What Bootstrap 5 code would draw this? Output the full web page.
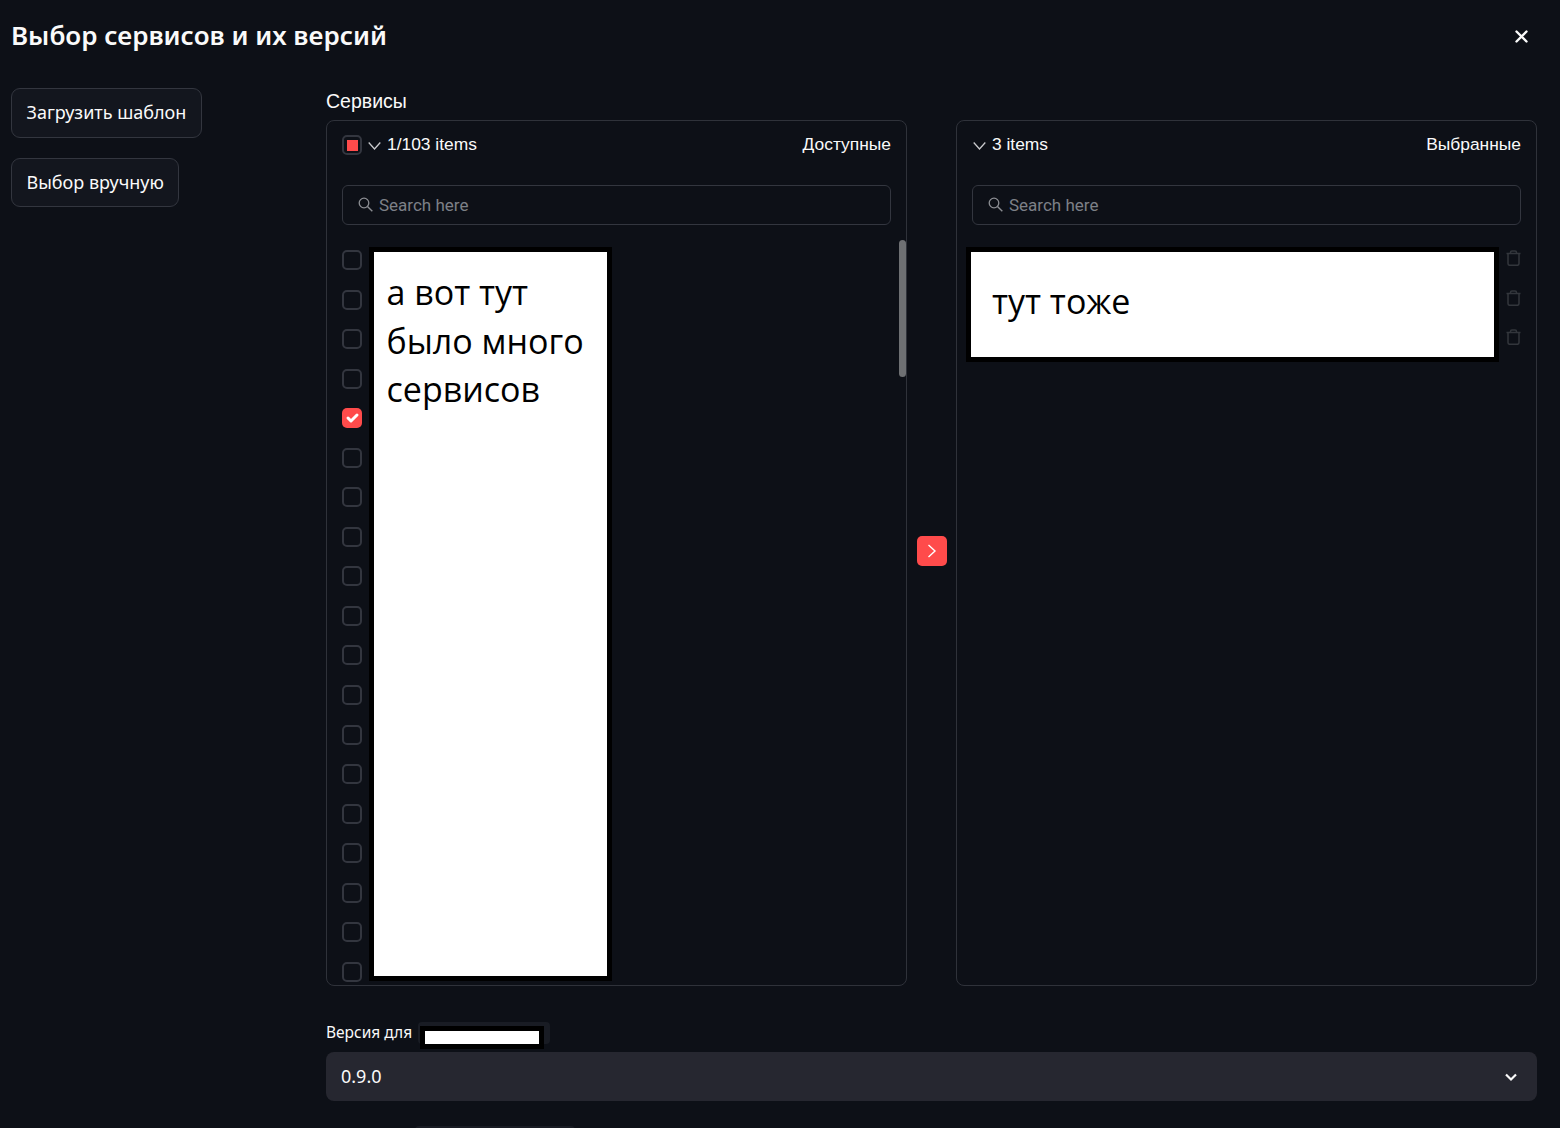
<!DOCTYPE html>
<html lang="ru">
<head>
    <meta charset="UTF-8">
    <meta name="viewport" content="width=device-width, initial-scale=1.0">
    <title>Выбор сервисов и их версий</title>
    <link href="https://cdn.jsdelivr.net/npm/bootstrap@5.3.0/dist/css/bootstrap.min.css" rel="stylesheet">
    <style>
        html, body { height: 1128px; overflow: hidden; }
        body { background: #0d1017; color: #fafafa; font-family: "Noto Sans", sans-serif; }
        .page-wrap { padding: 0 23px 0 11px; }
        .dlg-head { height: 72px; }
        .dlg-title { font-size: 26px; font-weight: 600; margin: -3px 0 0; line-height: 1; color: #fafafa; }
        .dlg-close { background: none; border: 0; padding: 0; margin-right: 9px; line-height: 0; }
        .side-col { width: 315px; flex: none; padding-top: 16px; }
        .side-btn { background: #13161e; border: 1px solid #33363f; border-radius: 9px; color: #fafafa; font-size: 18px; height: 49.500px; padding: 0 14.500px; margin-bottom: 20px; display: block; }
        .main-col { flex: 1; min-width: 0; }
        .field-label { font-family: "Liberation Sans", sans-serif; font-size: 19.500px; line-height: 20px; padding-top: 19px; height: 48px; }
        .tr-panel { flex: 1; height: 866px; border: 1px solid #2f323a; border-radius: 8px; padding: 14px 15px 0; position: relative; overflow: hidden; min-width: 0; }
        .tr-head { height: 20px; margin-bottom: 30px; font-family: "Liberation Sans", sans-serif; font-size: 17.400px; line-height: 18px; }
        .tr-head-text { margin-top: -3px; }
        .tr-chev { flex: none; margin-right: 6px; }
        .tr-chev-after { margin-left: 6px; }
        .tr-chev-first { margin-left: 1px; }
        .tr-search { height: 40px; border: 1px solid #33363f; border-radius: 6px; padding: 0 15px; margin-bottom: 25px; gap: 6px; }
        .tr-search svg { margin-top: -2px; }
        .tr-search input { background: transparent; border: 0; outline: 0; padding: 2px 0 0; color: #fafafa; width: 100%; font-family: Roboto, sans-serif; font-size: 17px; }
        .tr-search input::placeholder { color: #7d8087; opacity: 1; }
        .tr-row { height: 39.560px; }
        .tr-check.form-check-input { width: 20px; height: 20px; margin: 0; background-color: transparent; border: 2px solid #33363f; border-radius: 5px; flex: none; }
        .tr-check.form-check-input:checked { background-color: #ff4b4b; border: 0; background-size: 100%; }
        .tr-partial { width: 20px; height: 20px; border: 2px solid #33363f; border-radius: 5px; flex: none; padding: 2.500px; }
        .tr-partial span { display: block; height: 100%; background: #ff4b4b; }
        .tr-arrow-col { width: 49px; flex: none; padding-bottom: 4px; }
        .tr-arrow { width: 30px; height: 30px; padding: 0; border: 0; border-radius: 5px; background: #ff4b4b; line-height: 0; }
        .tr-scroll { position: absolute; right: 0; top: 119px; width: 7px; height: 137px; border-radius: 4px; background: #6e7073; }
        .mask-box { position: absolute; background: #fff; border: 5px solid #000; color: #000; font-family: "Open Sans", sans-serif; font-size: 34px; }
        .mask-left { left: 42px; top: 126px; width: 243px; height: 734px; padding: 16px 12.500px; line-height: 48.500px; }
        .mask-right { left: 9px; top: 126px; width: 533px; height: 115px; padding: 0 21px; line-height: 98px; }
        .del-list { margin-left: auto; width: 15px; line-height: 0; }
        .ver-label { font-size: 15.500px; height: 58px; padding-top: 36px; line-height: 20px; }
        .ver-tag { position: relative; display: inline-block; width: 132px; height: 22px; margin-left: 6px; background: #191c24; border-radius: 4px; vertical-align: top; }
        .ver-mask { position: absolute; left: 2px; top: 4px; width: 124px; height: 23px; background: #fff; border: 5px solid #000; }
        .ver-select.form-select { height: 49px; margin-top: 8px; background-color: #262730; border: 0; border-radius: 8px; color: #fafafa; font-size: 18px; padding-left: 15px; background-image: none; }
        .ver-wrap { position: relative; }
        .ver-chev { position: absolute; right: 19px; top: 20px; line-height: 0; pointer-events: none; }
        .next-tag { width: 160px; height: 22px; margin: 25px 0 0 89px; background: #191c24; border-radius: 4px; }
    </style>
</head>
<body>
    <div class="page-wrap">
        <div class="dlg-head d-flex align-items-center justify-content-between">
            <h1 class="dlg-title">Выбор сервисов и их версий</h1>
            <button class="dlg-close" type="button" aria-label="Close">
                <svg width="13" height="13" viewBox="0 0 13 13"><path d="M1.500 1.500l10 10M11.500 1.500l-10 10" stroke="#fafafa" stroke-width="2.400" stroke-linecap="round"/></svg>
            </button>
        </div>
        <div class="d-flex">
            <div class="side-col">
                <button class="side-btn" type="button">Загрузить шаблон</button>
                <button class="side-btn" type="button">Выбор вручную</button>
            </div>
            <div class="main-col">
                <div class="field-label">Сервисы</div>
                <div class="d-flex align-items-center">
                    <div class="tr-panel">
                        <div class="tr-head d-flex align-items-center">
                            <div class="tr-partial"><span></span></div>
                            <svg class="tr-chev tr-chev-after" width="13" height="12" viewBox="0 0 13 12"><path d="M.7 3.500L6.500 10l5.800-6.500" fill="none" stroke="#c8c9cc" stroke-width="1.300"/></svg>
                            <span class="tr-head-text">1/103 items</span>
                            <span class="tr-head-text ms-auto">Доступные</span>
                        </div>
                        <div class="tr-search d-flex align-items-center">
                            <svg width="15" height="15" viewBox="0 0 15 15" class="flex-shrink-0"><circle cx="6" cy="6" r="4.800" fill="none" stroke="#8c8e93" stroke-width="1.300"/><path d="M9.500 9.500L14.300 14.300" stroke="#8c8e93" stroke-width="1.400"/></svg>
                            <input type="text" placeholder="Search here">
                        </div>
                        <div class="tr-row"><input class="form-check-input tr-check" type="checkbox"></div>
                        <div class="tr-row"><input class="form-check-input tr-check" type="checkbox"></div>
                        <div class="tr-row"><input class="form-check-input tr-check" type="checkbox"></div>
                        <div class="tr-row"><input class="form-check-input tr-check" type="checkbox"></div>
                        <div class="tr-row"><input class="form-check-input tr-check" type="checkbox" checked></div>
                        <div class="tr-row"><input class="form-check-input tr-check" type="checkbox"></div>
                        <div class="tr-row"><input class="form-check-input tr-check" type="checkbox"></div>
                        <div class="tr-row"><input class="form-check-input tr-check" type="checkbox"></div>
                        <div class="tr-row"><input class="form-check-input tr-check" type="checkbox"></div>
                        <div class="tr-row"><input class="form-check-input tr-check" type="checkbox"></div>
                        <div class="tr-row"><input class="form-check-input tr-check" type="checkbox"></div>
                        <div class="tr-row"><input class="form-check-input tr-check" type="checkbox"></div>
                        <div class="tr-row"><input class="form-check-input tr-check" type="checkbox"></div>
                        <div class="tr-row"><input class="form-check-input tr-check" type="checkbox"></div>
                        <div class="tr-row"><input class="form-check-input tr-check" type="checkbox"></div>
                        <div class="tr-row"><input class="form-check-input tr-check" type="checkbox"></div>
                        <div class="tr-row"><input class="form-check-input tr-check" type="checkbox"></div>
                        <div class="tr-row"><input class="form-check-input tr-check" type="checkbox"></div>
                        <div class="tr-row"><input class="form-check-input tr-check" type="checkbox"></div>
                        <div class="mask-box mask-left">а вот тут<br>было много<br>сервисов</div>
                        <div class="tr-scroll"></div>
                    </div>
                    <div class="tr-arrow-col d-flex justify-content-center">
                        <button class="tr-arrow" type="button" aria-label="Add">
                            <svg width="12" height="14" viewBox="0 0 12 14"><path d="M2.500 1l6.500 6-6.500 6" fill="none" stroke="#fff" stroke-width="1.400"/></svg>
                        </button>
                    </div>
                    <div class="tr-panel">
                        <div class="tr-head d-flex align-items-center">
                            <svg class="tr-chev tr-chev-first" width="13" height="12" viewBox="0 0 13 12"><path d="M.7 3.500L6.500 10l5.800-6.500" fill="none" stroke="#c8c9cc" stroke-width="1.300"/></svg>
                            <span class="tr-head-text">3 items</span>
                            <span class="tr-head-text ms-auto">Выбранные</span>
                        </div>
                        <div class="tr-search d-flex align-items-center">
                            <svg width="15" height="15" viewBox="0 0 15 15" class="flex-shrink-0"><circle cx="6" cy="6" r="4.800" fill="none" stroke="#8c8e93" stroke-width="1.300"/><path d="M9.500 9.500L14.300 14.300" stroke="#8c8e93" stroke-width="1.400"/></svg>
                            <input type="text" placeholder="Search here">
                        </div>
                        <div class="tr-row d-flex"><div class="del-list"><svg width="15" height="16" viewBox="0 0 15 16"><path d="M.5 3.500h14M4.500 3.500V2.500q0-1.500 1.500-1.500h3q1.500 0 1.500 1.500v1M2 3.500v10q0 1.800 1.800 1.800h7.400q1.800 0 1.800-1.800v-10" fill="none" stroke="#33363c" stroke-width="1.500"/></svg></div></div>
                        <div class="tr-row d-flex"><div class="del-list"><svg width="15" height="16" viewBox="0 0 15 16"><path d="M.5 3.500h14M4.500 3.500V2.500q0-1.500 1.500-1.500h3q1.500 0 1.500 1.500v1M2 3.500v10q0 1.800 1.800 1.800h7.400q1.800 0 1.800-1.800v-10" fill="none" stroke="#33363c" stroke-width="1.500"/></svg></div></div>
                        <div class="tr-row d-flex"><div class="del-list"><svg width="15" height="16" viewBox="0 0 15 16"><path d="M.5 3.500h14M4.500 3.500V2.500q0-1.500 1.500-1.500h3q1.500 0 1.500 1.500v1M2 3.500v10q0 1.800 1.800 1.800h7.400q1.800 0 1.800-1.800v-10" fill="none" stroke="#33363c" stroke-width="1.500"/></svg></div></div>
                        <div class="mask-box mask-right">тут тоже</div>
                    </div>
                </div>
                <div class="ver-label">Версия для<span class="ver-tag"><span class="ver-mask"></span></span></div>
                <div class="ver-wrap">
                    <select class="form-select ver-select"><option>0.9.0</option></select>
                    <span class="ver-chev"><svg width="14" height="10" viewBox="0 0 14 10"><path d="M2 2.500l5 5 5-5" fill="none" stroke="#fafafa" stroke-width="2.200"/></svg></span>
                </div>
                <div class="next-tag"></div>
            </div>
        </div>
    </div>
    <script src="https://cdn.jsdelivr.net/npm/bootstrap@5.3.0/dist/js/bootstrap.bundle.min.js"></script>
</body>
</html>
